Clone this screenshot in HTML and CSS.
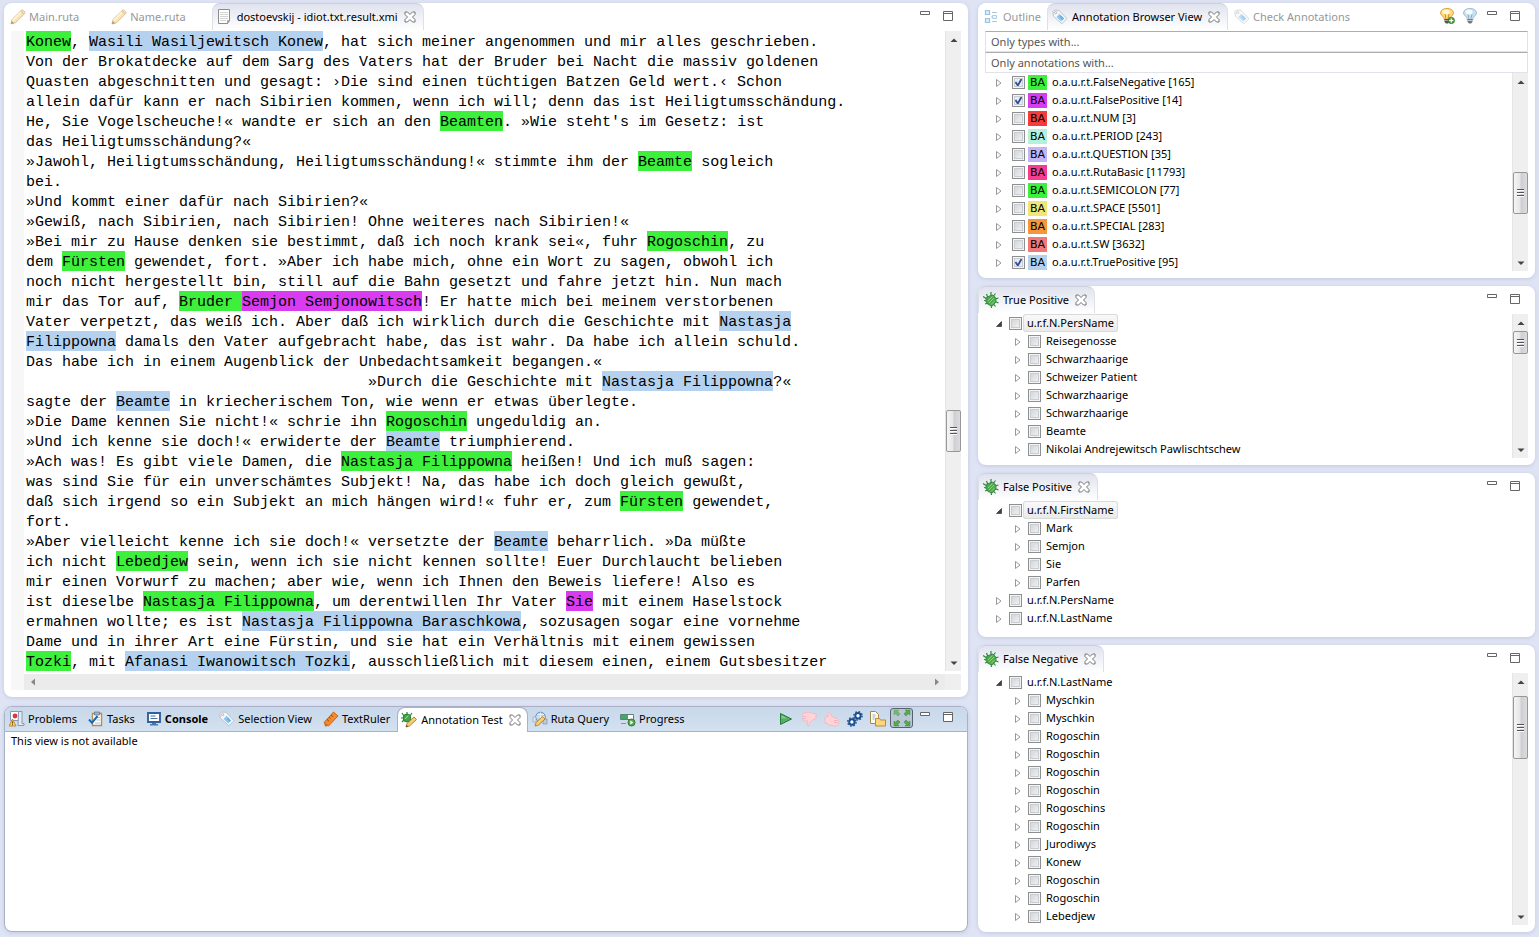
FILE: index.html
```html
<!DOCTYPE html>
<html lang="en">
<head>
<meta charset="utf-8">
<title>Annotation Workbench</title>
<link rel="stylesheet" href="styles.css">
</head>
<body>
<svg class="sprite" aria-hidden="true">
  <symbol id="pencil" viewBox="0 0 16 16"><path d="M1 15l1-4.500L11.500 1.200q1-.6 2 .3l1 1q.9 1 .2 2L5.500 13.700z" fill="#f9d68a" stroke="#b98b3e" stroke-width=".9"/><path d="M2.500 11.500L11 3" stroke="#fff1c4" stroke-width="1.500"/><path d="M10.800 2l3.300 3.300" stroke="#d9a08c" stroke-width="1.600"/><path d="M1 15l.8-3 2.200 2.200z" fill="#6b5438"/></symbol>
  <symbol id="page" viewBox="0 0 16 16"><path d="M1.500.5h11v11l-2 3h-9z" fill="#fff" stroke="#8c8c8c"/><path d="M3 3.500h8M3 5.500h8M3 7.500h8M3 9.500h8M3 11.500h6" stroke="#d4d4d4"/><path d="M12.500 11.500l-2 3v-3z" fill="#aaa" stroke="#8c8c8c" stroke-width=".6"/></symbol>
  <symbol id="x" viewBox="0 0 12 12"><path d="M1 1h2.500L6 3.500 8.500 1H11v2.500L8.500 6 11 8.500V11H8.500L6 8.500 3.500 11H1V8.500L3.500 6 1 3.500z" fill="#fff" stroke="#666" stroke-width=".9"/></symbol>
  <symbol id="min" viewBox="0 0 12 12"><path d="M1.500 1.500h9v3h-9z" fill="#fff" stroke="#666"/></symbol>
  <symbol id="max" viewBox="0 0 12 12"><path d="M1.500 1.500h9v9h-9zM1.500 3.500h9" fill="#fff" stroke="#666"/></symbol>
  <symbol id="outline" viewBox="0 0 16 16"><path d="M1.500 1.500h4v4h-4zM1.500 9.500h4v4h-4z" fill="#c4e5f9" stroke="#5b98c8" stroke-width="1.200"/><path d="M8 3.500h5M8 12.500h5M7 8h2M11 8h2" stroke="#6ea5d0" stroke-width="1.200"/><path d="M8.500 6.500h4v3h-4z" fill="#e3f2fb" stroke="#7badd3"/></symbol>
  <symbol id="tag" viewBox="0 0 16 16"><path d="M1 2.500L2.500 1 7 1.300 15 9.700 9.800 14.800 1.300 7z" fill="#f7f8fa" stroke="#b9bcc2" stroke-width=".9"/><path d="M7.500 4.800l4.700 4.700-3 3L4.500 8z" fill="#8cc6f2"/><path d="M9 6.500l3 3-1.500 1.500-3-3z" fill="#63b2ec"/><circle cx="3.600" cy="3.600" r="1.100" fill="#fff" stroke="#999" stroke-width=".7"/></symbol>
  <symbol id="bug" viewBox="0 0 16 16"><g stroke="#318539" stroke-width="1.200" fill="none"><path d="M5 6L3.500 2M8 4L8 0M10.500 4l2-2.500M12 7l3.500-1M12 9.500l3.500 1.500M10.500 12l2 2.500M4 7L0 4.500M4 9L1 8.500M5 11l-3 1M8 12.500l.5 3.500"/></g><path d="M3 6l3-1.800L10 3l3 3.200v3.600l-3.600 4.200L5 12.500l-2-3z" fill="#4caa4d" stroke="#2c7c35" stroke-width=".8"/><path d="M5 9l4.500-4.500M6 11l5-5M8 12.500l4-4" stroke="#98d685" stroke-width=".9"/></symbol>
  <symbol id="bulb" viewBox="0 0 16 16"><path d="M8 .5q6 0 6.500 4.500 0 2-3.500 4.500v2H5v-2Q1.500 7 1.500 5 2 .5 8 .5z" fill="#ffdc80" stroke="#e0a23c"/><ellipse cx="7" cy="4" rx="3.500" ry="2.500" fill="#fff8d8"/><path d="M6 6l1 5M10 6L9 11" stroke="#d98b25" fill="none"/><path d="M5.500 11h5v3l-1.500 1.500H7L5.500 14z" fill="#555"/><path d="M5.500 12.500h5" stroke="#bbb" stroke-width=".8"/></symbol>
  <symbol id="bulbplus" viewBox="0 0 16 16"><use href="#bulb"/><circle cx="12.300" cy="12.500" r="3.200" fill="#5a9f3e" stroke="#2f7426" stroke-width=".7"/><path d="M12.300 10.500v4M10.300 12.500h4" stroke="#fff" stroke-width="1.200"/></symbol>
  <symbol id="bulboff" viewBox="0 0 16 16"><path d="M8 .5q6 0 6.500 4.500 0 2-3.500 4.500v2H5v-2Q1.500 7 1.500 5 2 .5 8 .5z" fill="#c9e2f2" stroke="#9dbdd3"/><ellipse cx="7" cy="4" rx="3.500" ry="2.500" fill="#f6fbfe"/><path d="M6 6.500l1 4M10 6.500l-1 4" stroke="#86a8c0" fill="none"/><path d="M5.500 11h5v3l-1.500 1.500H7L5.500 14z" fill="#777"/><path d="M5.500 12.500h5" stroke="#ddd" stroke-width=".8"/></symbol>
  <symbol id="problems" viewBox="0 0 16 16"><path d="M1.500.5h8v9h-8z" fill="#fff" stroke="#8898b5"/><path d="M9.500.5h3.500v12h2v2H9z" fill="#e3ebf7" stroke="#8898b5"/><circle cx="6" cy="5" r="2.400" fill="#db3a3a"/><path d="M3.500 8L7 15H0z" fill="#ffcf5c" stroke="#b97b1b" stroke-width=".8"/><path d="M3.500 10.500v2M3.500 13.200v1" stroke="#704400" stroke-width="1.100"/></symbol>
  <symbol id="tasks" viewBox="0 0 16 16"><path d="M4.500 2.500h9v12h-9z" fill="#fff" stroke="#b28d55" stroke-width="1.400"/><path d="M6.500 1h5v3h-5z" fill="#aab5c5" stroke="#66748a" stroke-width=".8"/><path d="M8 6.500h4M8.500 9h3.500M7 12h5" stroke="#a6bfdc"/><path d="M1 8.500l3 3.300L9.500 5" fill="none" stroke="#1767b5" stroke-width="2"/></symbol>
  <symbol id="console" viewBox="0 0 16 16"><path d="M2 2h12v9H2z" fill="#fff" stroke="#2e609f" stroke-width="1.900"/><path d="M4.500 5h5M4.500 7.500h7" stroke="#4972a5"/><path d="M6 12h4v1H6zM4 13h8v1.500H4z" fill="#4d77ab"/></symbol>
  <symbol id="ruler" viewBox="0 0 16 16"><path d="M1 11.500L10.500 1 15 5 5.500 15z" fill="#f58a2c" stroke="#c25e14" stroke-width=".9"/><path d="M4 8.500l2 1.800M6 6.300l1.500 1.300M8 4l2 1.800" stroke="#883f0a" stroke-width=".9"/><path d="M1 11.500l4.500 3.500-3.500.5z" fill="#c96c28"/></symbol>
  <symbol id="bugpencil" viewBox="0 0 16 16"><g stroke="#2c8536" stroke-width="1.200" fill="none"><path d="M3 4L1 1M6 3V0M9 4l2-3M3 6H0M3 8L1 10"/></g><ellipse cx="6" cy="6" rx="3.800" ry="4" fill="#46a54a" stroke="#2c7c35"/><path d="M4 7l3.500-3.500" stroke="#a7dc90"/><path d="M5 15l1-3.500L13 5l2.500 2.500-7 6.500z" fill="#f6ce73" stroke="#a87830" stroke-width=".9"/><path d="M5 15l.6-2 1.600 1.400z" fill="#443"/></symbol>
  <symbol id="query" viewBox="0 0 16 16"><circle cx="8.500" cy="6" r="4.800" fill="#b7d4ee" stroke="#6790bb"/><path d="M8.500 1.500v9M4 6h9M5 3.500h7" stroke="#e9f3fb" stroke-width=".9"/><path d="M1 6h3v5H1z" fill="#dce4ee" stroke="#98a8bd" stroke-width=".7"/><path d="M11 8h4v5h-4z" fill="#bdcad9" stroke="#8294ab" stroke-width=".7"/><path d="M3 15l1-3.500 6.500-6L13 8l-6.500 6z" fill="#f6ce73" stroke="#b37d2e" stroke-width=".9"/></symbol>
  <symbol id="progress" viewBox="0 0 16 16"><path d="M.5 3.500h13v5H.5z" fill="#fff" stroke="#5d8375"/><path d="M1 4h7v4H1z" fill="#46a669"/><path d="M1 12.500h5" stroke="#7f9c92"/><circle cx="11.500" cy="11.500" r="3.500" fill="#5baa51" stroke="#33783a"/><path d="M10.300 9.500l3 2-3 2z" fill="#fff"/></symbol>
  <symbol id="play" viewBox="0 0 16 16"><path d="M2.500 2.500l11 5.500-11 5.500z" fill="#58ad68" stroke="#247a3d"/><path d="M3.500 4.500L9 7.300H3.500z" fill="#8bcf94"/></symbol>
  <symbol id="down" viewBox="0 0 16 16"><path d="M2 2.500q5-2 8.500-.7l1 .7H15v5l-3.500 1.500-3 3-.5 3q-2 .5-1.800-2l.8-3H2.500Q.8 9 2 7.500q-1-1-.2-2-.6-2 .2-3z" fill="#ffd3d7" stroke="#f7b3ba" stroke-width=".8"/><path d="M2 5.500h3M2 7.700h3" stroke="#f3abb2" stroke-width=".8"/></symbol>
  <symbol id="up" viewBox="0 0 16 16"><path d="M1 6l3.500-.5L4 2.500Q4 .5 5.500 1.500L8.500 6l5 1.800q1.500.5.5 1.500 1.300 1 .3 2.200 1 1-.3 2-.3 1.500-3 1.500l-6-1-2-1.800-2 .3z" fill="#ffd3d7" stroke="#f7b3ba" stroke-width=".8"/><path d="M10 9.500h3.500M10 11.500h3.500" stroke="#f3abb2" stroke-width=".8"/></symbol>
  <symbol id="gears" viewBox="0 0 16 16"><g fill="#fff" stroke="#1a4f8d"><circle cx="11" cy="4.800" r="2.700" stroke-width="2"/><circle cx="11" cy="4.800" r="4.200" stroke-width="1.300" stroke-dasharray="1.600 1.700" fill="none"/><circle cx="4.900" cy="11" r="2.700" stroke-width="2"/><circle cx="4.900" cy="11" r="4.200" stroke-width="1.300" stroke-dasharray="1.600 1.700" fill="none"/></g></symbol>
  <symbol id="docs" viewBox="0 0 16 16"><path d="M.5.500h5l3 3v9h-8z" fill="#fffdf2" stroke="#a18a52"/><path d="M2.500 4h3M2.500 6h3M2.500 8h2" stroke="#8faed1"/><path d="M5.500 7.500h4l1 1.500h5v6h-10z" fill="#fbd67c" stroke="#be8b32"/></symbol>
  <symbol id="expand" viewBox="0 0 18 18"><g fill="#55aa4b" stroke="#3a8a37" stroke-width=".5"><path d="M1 1h5L4.700 2.300 7 5 5 7 2.400 4.700 1 6z" opacity=".65"/><path d="M17 1v5l-1.400-1.300L13 7l-2-2 2.300-2.700L12 1z"/><path d="M1 17v-5l1.400 1.300L5 11l2 2-2.300 2.700L6 17z"/><path d="M17 17h-5l1.300-1.300L11 13l2-2 2.600 2.300L17 12z"/></g></symbol>
</svg>

<main class="workbench">
  <div class="column column-main">
    <section class="panel editor-panel">
      <header class="tabs">
        <button class="tab dim roomy"><svg class="icon"><use href="#pencil"/></svg>Main.ruta</button>
        <button class="tab dim roomy"><svg class="icon"><use href="#pencil"/></svg>Name.ruta</button>
        <div class="tab active"><button class="tab-label"><svg class="icon"><use href="#page"/></svg>dostoevskij - idiot.txt.result.xmi</button><button class="close" aria-label="Close"><svg><use href="#x"/></svg></button></div>
        <div class="tools"><button aria-label="Minimize"><svg class="win"><use href="#min"/></svg></button><button aria-label="Maximize"><svg class="win"><use href="#max"/></svg></button></div>
      </header>
      <div class="editor">
        <div class="ruler"></div>
        <div class="text">
          <p><mark class="fn">Konew</mark>, <mark class="tp">Wasili Wasiljewitsch Konew</mark>, hat sich meiner angenommen und mir alles geschrieben.</p>
          <p>Von der Brokatdecke auf dem Sarg des Vaters hat der Bruder bei Nacht die massiv goldenen</p>
          <p>Quasten abgeschnitten und gesagt: ›Die sind einen tüchtigen Batzen Geld wert.‹ Schon</p>
          <p>allein dafür kann er nach Sibirien kommen, wenn ich will; denn das ist Heiligtumsschändung.</p>
          <p>He, Sie Vogelscheuche!« wandte er sich an den <mark class="fn">Beamten</mark>. »Wie steht's im Gesetz: ist</p>
          <p>das Heiligtumsschändung?«</p>
          <p>»Jawohl, Heiligtumsschändung, Heiligtumsschändung!« stimmte ihm der <mark class="fn">Beamte</mark> sogleich</p>
          <p>bei.</p>
          <p>»Und kommt einer dafür nach Sibirien?«</p>
          <p>»Gewiß, nach Sibirien, nach Sibirien! Ohne weiteres nach Sibirien!«</p>
          <p>»Bei mir zu Hause denken sie bestimmt, daß ich noch krank sei«, fuhr <mark class="fn">Rogoschin</mark>, zu</p>
          <p>dem <mark class="fn">Fürsten</mark> gewendet, fort. »Aber ich habe mich, ohne ein Wort zu sagen, obwohl ich</p>
          <p>noch nicht hergestellt bin, still auf die Bahn gesetzt und fahre jetzt hin. Nun mach</p>
          <p>mir das Tor auf, <mark class="fn">Bruder </mark><mark class="fp">Semjon Semjonowitsch</mark>! Er hatte mich bei meinem verstorbenen</p>
          <p>Vater verpetzt, das weiß ich. Aber daß ich wirklich durch die Geschichte mit <mark class="tp">Nastasja</mark></p>
          <p><mark class="tp">Filippowna</mark> damals den Vater aufgebracht habe, das ist wahr. Da habe ich allein schuld.</p>
          <p>Das habe ich in einem Augenblick der Unbedachtsamkeit begangen.«</p>
          <p>                                      »Durch die Geschichte mit <mark class="tp">Nastasja Filippowna</mark>?«</p>
          <p>sagte der <mark class="tp">Beamte</mark> in kriecherischem Ton, wie wenn er etwas überlegte.</p>
          <p>»Die Dame kennen Sie nicht!« schrie ihn <mark class="fn">Rogoschin</mark> ungeduldig an.</p>
          <p>»Und ich kenne sie doch!« erwiderte der <mark class="tp">Beamte</mark> triumphierend.</p>
          <p>»Ach was! Es gibt viele Damen, die <mark class="fn">Nastasja Filippowna</mark> heißen! Und ich muß sagen:</p>
          <p>was sind Sie für ein unverschämtes Subjekt! Na, das habe ich doch gleich gewußt,</p>
          <p>daß sich irgend so ein Subjekt an mich hängen wird!« fuhr er, zum <mark class="fn">Fürsten</mark> gewendet,</p>
          <p>fort.</p>
          <p>»Aber vielleicht kenne ich sie doch!« versetzte der <mark class="tp">Beamte</mark> beharrlich. »Da müßte</p>
          <p>ich nicht <mark class="fn">Lebedjew</mark> sein, wenn ich sie nicht kennen sollte! Euer Durchlaucht belieben</p>
          <p>mir einen Vorwurf zu machen; aber wie, wenn ich Ihnen den Beweis liefere! Also es</p>
          <p>ist dieselbe <mark class="fn">Nastasja Filippowna</mark>, um derentwillen Ihr Vater <mark class="fp">Sie</mark> mit einem Haselstock</p>
          <p>ermahnen wollte; es ist <mark class="tp">Nastasja Filippowna Baraschkowa</mark>, sozusagen sogar eine vornehme</p>
          <p>Dame und in ihrer Art eine Fürstin, und sie hat ein Verhältnis mit einem gewissen</p>
          <p><mark class="fn">Tozki</mark>, mit <mark class="tp">Afanasi Iwanowitsch Tozki</mark>, ausschließlich mit diesem einen, einem Gutsbesitzer</p>
        </div>
        <div class="vscroll"><button class="arrow a-up" aria-label="Scroll up"></button><i style="flex-grow:362"></i><b class="thumb medium"></b><i style="flex-grow:202"></i><button class="arrow a-down" aria-label="Scroll down"></button></div>
        <div class="hscroll"><button class="arrow a-left" aria-label="Scroll left"></button><i style="flex-grow:1"></i><button class="arrow a-right" aria-label="Scroll right"></button></div>
        <div class="corner"></div>
      </div>
    </section>

    <section class="panel console-panel">
      <header class="tabs strip">
        <button class="tab"><svg class="icon"><use href="#problems"/></svg>Problems</button>
        <button class="tab"><svg class="icon"><use href="#tasks"/></svg>Tasks</button>
        <button class="tab bold"><svg class="icon"><use href="#console"/></svg>Console</button>
        <button class="tab"><svg class="icon"><use href="#tag"/></svg>Selection View</button>
        <button class="tab"><svg class="icon"><use href="#ruler"/></svg>TextRuler</button>
        <div class="tab active"><button class="tab-label"><svg class="icon"><use href="#bugpencil"/></svg>Annotation Test</button><button class="close" aria-label="Close"><svg><use href="#x"/></svg></button></div>
        <button class="tab"><svg class="icon"><use href="#query"/></svg>Ruta Query</button>
        <button class="tab"><svg class="icon"><use href="#progress"/></svg>Progress</button>
        <div class="tools">
          <div class="actions">
            <button aria-label="Run"><svg class="icon"><use href="#play"/></svg></button>
            <button aria-label="Reject"><svg class="icon"><use href="#down"/></svg></button>
            <button aria-label="Accept"><svg class="icon"><use href="#up"/></svg></button>
            <button aria-label="Settings"><svg class="icon"><use href="#gears"/></svg></button>
            <button aria-label="Load files"><svg class="icon"><use href="#docs"/></svg></button>
          </div>
          <button class="toggled" aria-label="Expand all" aria-pressed="true"><svg><use href="#expand"/></svg></button>
          <button aria-label="Minimize"><svg class="win"><use href="#min"/></svg></button><button aria-label="Maximize"><svg class="win"><use href="#max"/></svg></button>
        </div>
      </header>
      <p class="message">This view is not available</p>
    </section>
  </div>

  <div class="column column-side">
    <section class="panel">
      <header class="tabs">
        <button class="tab dim"><svg class="icon"><use href="#outline"/></svg>Outline</button>
        <div class="tab active"><button class="tab-label"><svg class="icon"><use href="#tag"/></svg>Annotation Browser View</button><button class="close" aria-label="Close"><svg><use href="#x"/></svg></button></div>
        <button class="tab dim"><svg class="icon"><use href="#tag"/></svg>Check Annotations</button>
        <div class="tools">
          <div class="actions">
            <button aria-label="Add highlight"><svg class="icon"><use href="#bulbplus"/></svg></button>
            <button aria-label="Clear highlight"><svg class="icon"><use href="#bulboff"/></svg></button>
          </div>
          <button aria-label="Minimize"><svg class="win"><use href="#min"/></svg></button><button aria-label="Maximize"><svg class="win"><use href="#max"/></svg></button>
        </div>
      </header>
      <div class="filters">
        <input type="text" placeholder="Only types with..." aria-label="Only types with">
        <input type="text" placeholder="Only annotations with..." aria-label="Only annotations with">
      </div>
      <div class="list">
        <ul class="tree types">
          <li><button class="tw" aria-label="Expand"></button><label><input type="checkbox" checked><span class="ba fn">BA</span>o.a.u.r.t.FalseNegative [165]</label></li>
          <li><button class="tw" aria-label="Expand"></button><label><input type="checkbox" checked><span class="ba fp">BA</span>o.a.u.r.t.FalsePositive [14]</label></li>
          <li><button class="tw" aria-label="Expand"></button><label><input type="checkbox"><span class="ba num">BA</span>o.a.u.r.t.NUM [3]</label></li>
          <li><button class="tw" aria-label="Expand"></button><label><input type="checkbox"><span class="ba period">BA</span>o.a.u.r.t.PERIOD [243]</label></li>
          <li><button class="tw" aria-label="Expand"></button><label><input type="checkbox"><span class="ba question">BA</span>o.a.u.r.t.QUESTION [35]</label></li>
          <li><button class="tw" aria-label="Expand"></button><label><input type="checkbox"><span class="ba basic">BA</span>o.a.u.r.t.RutaBasic [11793]</label></li>
          <li><button class="tw" aria-label="Expand"></button><label><input type="checkbox"><span class="ba fn">BA</span>o.a.u.r.t.SEMICOLON [77]</label></li>
          <li><button class="tw" aria-label="Expand"></button><label><input type="checkbox"><span class="ba space">BA</span>o.a.u.r.t.SPACE [5501]</label></li>
          <li><button class="tw" aria-label="Expand"></button><label><input type="checkbox"><span class="ba special">BA</span>o.a.u.r.t.SPECIAL [283]</label></li>
          <li><button class="tw" aria-label="Expand"></button><label><input type="checkbox"><span class="ba sw">BA</span>o.a.u.r.t.SW [3632]</label></li>
          <li><button class="tw" aria-label="Expand"></button><label><input type="checkbox" checked><span class="ba tp">BA</span>o.a.u.r.t.TruePositive [95]</label></li>
        </ul>
        <div class="vscroll"><button class="arrow a-up" aria-label="Scroll up"></button><i style="flex-grow:83"></i><b class="thumb medium"></b><i style="flex-grow:40"></i><button class="arrow a-down" aria-label="Scroll down"></button></div>
      </div>
    </section>

    <section class="panel">
      <header class="tabs">
        <div class="tab active"><button class="tab-label"><svg class="icon"><use href="#bug"/></svg>True Positive</button><button class="close" aria-label="Close"><svg><use href="#x"/></svg></button></div>
        <div class="tools"><button aria-label="Minimize"><svg class="win"><use href="#min"/></svg></button><button aria-label="Maximize"><svg class="win"><use href="#max"/></svg></button></div>
      </header>
      <div class="list">
        <ul class="tree">
          <li><button class="tw open" aria-label="Collapse"></button><label><input type="checkbox"><span class="selected">u.r.f.N.PersName</span></label></li>
          <li class="child"><button class="tw" aria-label="Expand"></button><label><input type="checkbox"><span>Reisegenosse</span></label></li>
          <li class="child"><button class="tw" aria-label="Expand"></button><label><input type="checkbox"><span>Schwarzhaarige</span></label></li>
          <li class="child"><button class="tw" aria-label="Expand"></button><label><input type="checkbox"><span>Schweizer Patient</span></label></li>
          <li class="child"><button class="tw" aria-label="Expand"></button><label><input type="checkbox"><span>Schwarzhaarige</span></label></li>
          <li class="child"><button class="tw" aria-label="Expand"></button><label><input type="checkbox"><span>Schwarzhaarige</span></label></li>
          <li class="child"><button class="tw" aria-label="Expand"></button><label><input type="checkbox"><span>Beamte</span></label></li>
          <li class="child"><button class="tw" aria-label="Expand"></button><label><input type="checkbox"><span>Nikolai Andrejewitsch Pawlischtschew</span></label></li>
        </ul>
        <div class="vscroll"><button class="arrow a-up" aria-label="Scroll up"></button><b class="thumb small"></b><i style="flex-grow:1"></i><button class="arrow a-down" aria-label="Scroll down"></button></div>
      </div>
    </section>

    <section class="panel">
      <header class="tabs">
        <div class="tab active"><button class="tab-label"><svg class="icon"><use href="#bug"/></svg>False Positive</button><button class="close" aria-label="Close"><svg><use href="#x"/></svg></button></div>
        <div class="tools"><button aria-label="Minimize"><svg class="win"><use href="#min"/></svg></button><button aria-label="Maximize"><svg class="win"><use href="#max"/></svg></button></div>
      </header>
      <div class="list roomy-list">
        <ul class="tree">
          <li><button class="tw open" aria-label="Collapse"></button><label><input type="checkbox"><span class="selected">u.r.f.N.FirstName</span></label></li>
          <li class="child"><button class="tw" aria-label="Expand"></button><label><input type="checkbox"><span>Mark</span></label></li>
          <li class="child"><button class="tw" aria-label="Expand"></button><label><input type="checkbox"><span>Semjon</span></label></li>
          <li class="child"><button class="tw" aria-label="Expand"></button><label><input type="checkbox"><span>Sie</span></label></li>
          <li class="child"><button class="tw" aria-label="Expand"></button><label><input type="checkbox"><span>Parfen</span></label></li>
          <li><button class="tw" aria-label="Expand"></button><label><input type="checkbox"><span>u.r.f.N.PersName</span></label></li>
          <li><button class="tw" aria-label="Expand"></button><label><input type="checkbox"><span>u.r.f.N.LastName</span></label></li>
        </ul>
      </div>
    </section>

    <section class="panel fill">
      <header class="tabs">
        <div class="tab active"><button class="tab-label"><svg class="icon"><use href="#bug"/></svg>False Negative</button><button class="close" aria-label="Close"><svg><use href="#x"/></svg></button></div>
        <div class="tools"><button aria-label="Minimize"><svg class="win"><use href="#min"/></svg></button><button aria-label="Maximize"><svg class="win"><use href="#max"/></svg></button></div>
      </header>
      <div class="list">
        <ul class="tree">
          <li><button class="tw open" aria-label="Collapse"></button><label><input type="checkbox"><span>u.r.f.N.LastName</span></label></li>
          <li class="child"><button class="tw" aria-label="Expand"></button><label><input type="checkbox"><span>Myschkin</span></label></li>
          <li class="child"><button class="tw" aria-label="Expand"></button><label><input type="checkbox"><span>Myschkin</span></label></li>
          <li class="child"><button class="tw" aria-label="Expand"></button><label><input type="checkbox"><span>Rogoschin</span></label></li>
          <li class="child"><button class="tw" aria-label="Expand"></button><label><input type="checkbox"><span>Rogoschin</span></label></li>
          <li class="child"><button class="tw" aria-label="Expand"></button><label><input type="checkbox"><span>Rogoschin</span></label></li>
          <li class="child"><button class="tw" aria-label="Expand"></button><label><input type="checkbox"><span>Rogoschin</span></label></li>
          <li class="child"><button class="tw" aria-label="Expand"></button><label><input type="checkbox"><span>Rogoschins</span></label></li>
          <li class="child"><button class="tw" aria-label="Expand"></button><label><input type="checkbox"><span>Rogoschin</span></label></li>
          <li class="child"><button class="tw" aria-label="Expand"></button><label><input type="checkbox"><span>Jurodiwys</span></label></li>
          <li class="child"><button class="tw" aria-label="Expand"></button><label><input type="checkbox"><span>Konew</span></label></li>
          <li class="child"><button class="tw" aria-label="Expand"></button><label><input type="checkbox"><span>Rogoschin</span></label></li>
          <li class="child"><button class="tw" aria-label="Expand"></button><label><input type="checkbox"><span>Rogoschin</span></label></li>
          <li class="child"><button class="tw" aria-label="Expand"></button><label><input type="checkbox"><span>Lebedjew</span></label></li>
        </ul>
        <div class="vscroll"><button class="arrow a-up" aria-label="Scroll up"></button><i style="flex-grow:6"></i><b class="thumb large"></b><i style="flex-grow:149"></i><button class="arrow a-down" aria-label="Scroll down"></button></div>
      </div>
    </section>
  </div>
</main>
</body>
</html>
```
FILE: styles.css
```css
* { box-sizing: border-box; }

body {
  margin: 0;
  background: #dfe4f5;
  color: #000;
  font: 11px/18px "Noto Sans", "Open Sans", sans-serif;
}

button {
  margin: 0;
  padding: 0;
  border: 0;
  background: none;
  color: inherit;
  font: inherit;
}

svg { display: block; flex: none; }
.sprite { position: absolute; width: 0; height: 0; }
.icon { width: 16px; height: 16px; }
.win { width: 12px; height: 12px; }

.workbench {
  display: flex;
  gap: 10px;
  min-height: 100vh;
  padding: 3px 4px 5px;
}

.column { display: flex; flex-direction: column; gap: 8px; min-width: 0; }
.column-main { flex: 964 1 0; gap: 9px; }
.column-side { flex: 557 1 0; }

.panel {
  display: flex;
  flex-direction: column;
  border-radius: 8px;
  background: #fff;
  box-shadow: 0 1px 4px #c3c8dc;
}
.fill { flex: 1; }

/* Tab bars */
.tabs { display: flex; height: 28px; }

.tab, .tab-label {
  display: flex;
  align-items: center;
  gap: 3px;
  white-space: nowrap;
}
.tab { height: 27px; padding: 0 6px; }
.tab-label { gap: 4px; }
.dim { color: #979797; }
.dim .icon { opacity: .6; }
.roomy { padding-right: 26px; }

.tab.active {
  gap: 6px;
  padding: 0 7px 0 4px;
  border: 1px solid #dddfe9;
  border-top-color: #cdd0dd;
  border-bottom: 0;
  border-radius: 8px 8px 0 0;
  background: linear-gradient(#e0e3ee, #fff);
}
.close svg { width: 12px; height: 12px; }

.tools {
  display: flex;
  align-items: flex-start;
  gap: 11px;
  margin-left: auto;
  padding: 7px 14px 0 0;
}
.actions { display: flex; gap: 7px; margin: -2px -3px 0 0; }

/* Editor */
.editor {
  display: grid;
  grid-template-columns: 13px 1fr 16px;
  grid-template-rows: auto 16px;
  row-gap: 3px;
  padding: 0 7px 7px;
}
.ruler { grid-row: 1 / 3; background: #f7f7f7; }
.text {
  min-width: 0;
  padding-left: 2px;
  overflow: hidden;
  font: 15px/24px "Liberation Mono", monospace;
}
.text p {
  display: flex;
  height: 20px;
  margin: 0;
  white-space: pre;
}
.text mark { height: 20px; color: #000; }
.hscroll { display: flex; grid-column: 2; background: #ebebeb; }
.corner { background: #efefef; }

.fn { background: #3cf03c; }
.fp { background: #d93cf0; }
.tp { background: #b4d2f0; }
.num { background: #f53c3c; }
.period { background: #b4f0dc; }
.question { background: #c3b4f5; }
.basic { background: #f53c91; }
.space { background: #f0e678; }
.special { background: #f5963c; }
.sw { background: #f07878; }

/* Scroll bars */
.vscroll {
  display: flex;
  flex: none;
  flex-direction: column;
  width: 16px;
  border-left: 1px solid #e5e5e5;
  background: #efefef;
}
.arrow { flex: none; width: 100%; height: 17px; background: center / 8px 8px no-repeat; }
.a-up { background-image: url("data:image/svg+xml,%3Csvg xmlns='http://www.w3.org/2000/svg' viewBox='0 0 8 8'%3E%3Cpath d='M.5 6L4 2.500 7.500 6z' fill='%23444'/%3E%3C/svg%3E"); }
.a-down { background-image: url("data:image/svg+xml,%3Csvg xmlns='http://www.w3.org/2000/svg' viewBox='0 0 8 8'%3E%3Cpath d='M.5 2.500L4 6 7.500 2.500z' fill='%23444'/%3E%3C/svg%3E"); }
.hscroll .arrow { width: 17px; height: 16px; }
.a-left { background-image: url("data:image/svg+xml,%3Csvg xmlns='http://www.w3.org/2000/svg' viewBox='0 0 8 8'%3E%3Cpath d='M6 .5L2 4 6 7.500z' fill='%23888'/%3E%3C/svg%3E"); }
.a-right { background-image: url("data:image/svg+xml,%3Csvg xmlns='http://www.w3.org/2000/svg' viewBox='0 0 8 8'%3E%3Cpath d='M2 .5L6 4 2 7.500z' fill='%23888'/%3E%3C/svg%3E"); }

.thumb {
  display: flex;
  align-items: center;
  justify-content: center;
  flex: none;
  width: 15px;
  border: 1px solid #979797;
  border-radius: 2px;
  background: linear-gradient(90deg, #f5f5f5, #e6e6e8 45%, #cfcfd3 55%, #dcdce0);
}
.thumb::before {
  content: "";
  width: 7px;
  height: 8px;
  background: repeating-linear-gradient(#555 0 1px, #fff 1px 2px, transparent 2px 3px);
}
.small { height: 23px; }
.medium { height: 42px; }
.large { height: 63px; }

/* Bottom views */
.console-panel { flex: 1; overflow: hidden; border: 1px solid #a9b1c6; }
.strip {
  height: 25px;
  border-bottom: 1px solid #a9b1c6;
  background: linear-gradient(#c8d8ea, #d3e1f0);
}
.strip .tab { height: 24px; padding: 0 7px 0 4px; }
.strip .tab.active {
  height: 25px;
  padding: 0 6px 0 3px;
  border-color: #a9b1c6;
  background: #fff;
}
.bold { font-weight: 700; }
.strip .tools { padding: 4px 13px 0 0; }
.strip .actions { margin: 0 -7px 0 0; }
.toggled {
  display: grid;
  place-items: center;
  width: 23px;
  height: 20px;
  margin: -3px -5px 0 0;
  border: 1px solid #59616f;
  border-radius: 3px;
  background: #b9c6d6;
}
.toggled svg { width: 18px; height: 18px; }
.message { margin: 0; padding: 0 6px; }

/* Filters and trees */
.filters { display: grid; padding: 0 7px; }
.filters input {
  width: 100%;
  height: 21px;
  padding: 0 5px;
  border: 1px solid #e2e3ea;
  border-top-color: #abadb3;
  background: #fff;
  font: inherit;
}
.filters input::placeholder { color: #555; }

.list { display: flex; flex: 1; padding: 0 7px 7px; }
.roomy-list { padding-bottom: 10px; }
.tree { flex: 1; min-width: 0; margin: 0; padding: 0 0 0 8px; list-style: none; }
.tree li { display: flex; align-items: center; height: 18px; }
.tree .child { padding-left: 19px; }
.tree label { display: flex; align-items: center; white-space: nowrap; }
.tree label span { padding: 0 4px; }
.types li { gap: 3px; }

.tw {
  flex: none;
  width: 16px;
  height: 18px;
  background: url("data:image/svg+xml,%3Csvg xmlns='http://www.w3.org/2000/svg' viewBox='0 0 8 10'%3E%3Cpath d='M1.500 1.500v7L6 5z' fill='white' stroke='%23999'/%3E%3C/svg%3E") 2px 5px / 8px 10px no-repeat;
}
.tw.open { background-image: url("data:image/svg+xml,%3Csvg xmlns='http://www.w3.org/2000/svg' viewBox='0 0 8 10'%3E%3Cpath d='M6.500 2.500v5h-5z' fill='%23444' stroke='%23222' stroke-width='.6'/%3E%3C/svg%3E"); }

.tree input {
  flex: none;
  appearance: none;
  width: 13px;
  height: 13px;
  margin: 1px 1px 0 0;
  border: 1px solid #8e8f8f;
  background: linear-gradient(135deg, #cdd0d5, #f6f6f6);
  box-shadow: inset 0 0 0 1px #f4f4f4, inset 0 0 0 2px #c9ccd0;
}
.tree input:checked { background: url("data:image/svg+xml,%3Csvg xmlns='http://www.w3.org/2000/svg' viewBox='0 0 11 11'%3E%3Cpath d='M2.500 5l2.300 3.500L8.500 2' fill='none' stroke='%23304f9a' stroke-width='1.800'/%3E%3C/svg%3E") center / 11px 11px, #e9ebee; }

.selected {
  border-radius: 3px;
  background: linear-gradient(#fafafa, #e9e9e9);
  box-shadow: inset 0 0 0 1px #dadada;
}
.tree .ba {
  width: 19px;
  height: 15px;
  margin: 0 5px 0 2px;
  padding: 0;
  font: 11px/15px "DejaVu Sans", sans-serif;
  text-align: center;
}
```
